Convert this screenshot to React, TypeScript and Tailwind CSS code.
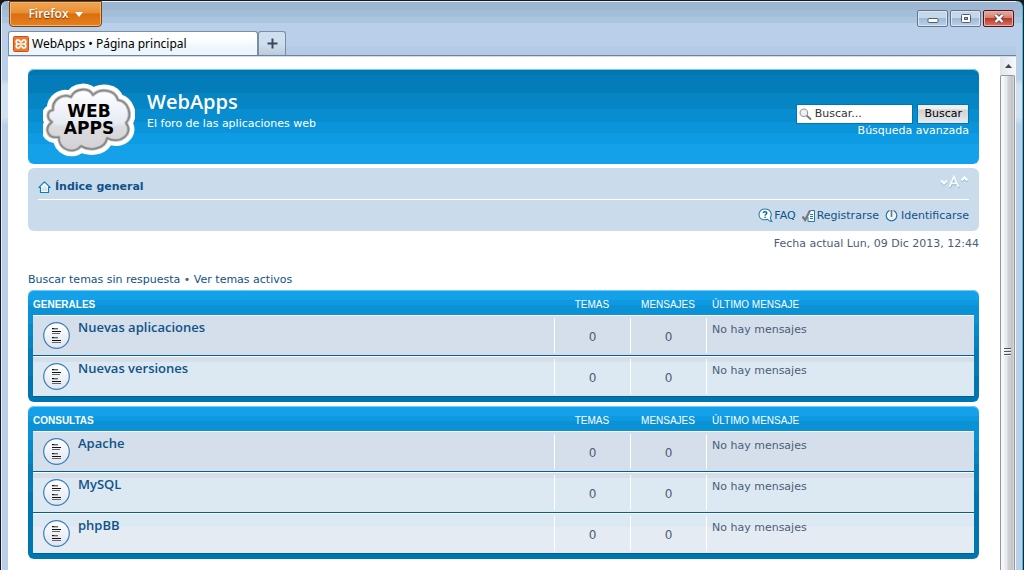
import React from "react";

type Forum = { name: string; topics: number; posts: number; last: string };

const categories: { title: string; forums: Forum[] }[] = [
  {
    title: "GENERALES",
    forums: [
      { name: "Nuevas aplicaciones", topics: 0, posts: 0, last: "No hay mensajes" },
      { name: "Nuevas versiones", topics: 0, posts: 0, last: "No hay mensajes" },
    ],
  },
  {
    title: "CONSULTAS",
    forums: [
      { name: "Apache", topics: 0, posts: 0, last: "No hay mensajes" },
      { name: "MySQL", topics: 0, posts: 0, last: "No hay mensajes" },
      { name: "phpBB", topics: 0, posts: 0, last: "No hay mensajes" },
    ],
  },
];

const rowBackgrounds = [
  "bg-[#d4dfeb]",
  "bg-[linear-gradient(#d4dfeb_0_6px,#dce9f2_6px)]",
  "bg-[linear-gradient(#dce9f2_0_14px,#e4ebf3_14px)]",
];

const cloudPath =
  "M10 27C9 17 19 10 28 14C32 5 46 4 50 12C57 5 72 6 75 17C85 18 90 32 83 40C91 50 78 62 64 55C62 67 46 68 38 63C30 72 15 66 16 54C4 56 1 45 9 39C3 35 4 28 10 27Z";

function CloudLogo() {
  return (
    <svg width="92" height="76" viewBox="0 0 92 76" role="img" aria-label="Web Apps">
      <defs>
        <linearGradient id="cloud" x1="0" y1="0" x2="0" y2="1">
          <stop offset="0" stopColor="#fff" />
          <stop offset="0.55" stopColor="#e6ebf4" />
          <stop offset="0.62" stopColor="#dcdcdf" />
          <stop offset="1" stopColor="#d2d2d4" />
        </linearGradient>
      </defs>
      <g strokeLinejoin="round">
        <path d={cloudPath} fill="#fff" stroke="#fff" strokeWidth="12" />
        <path d={cloudPath} fill="url(#cloud)" stroke="#c4c4c4" strokeWidth="3.5" />
        <path d={cloudPath} fill="none" stroke="#858585" strokeWidth="1.6" />
      </g>
      <text x="46" y="34" textAnchor="middle" className="font-['DejaVu_Sans',sans-serif] text-[17px] leading-4 font-bold">WEB</text>
      <text x="46" y="51" textAnchor="middle" className="font-['DejaVu_Sans',sans-serif] text-[17px] leading-4 font-bold">APPS</text>
    </svg>
  );
}

function XamppIcon() {
  return (
    <svg width="16" height="16" viewBox="0 0 16 16" aria-hidden="true">
      <rect x="0.5" y="0.5" width="15" height="15" rx="1" fill="#f4792b" stroke="#c2541c" />
      <path
        d="M5.2 3.8C2.8 3.8 2.4 6.8 4.6 7.9C2.4 9 2.8 12.2 5.2 12.2C6.6 12.2 6.8 10 8 10C9.2 10 9.400 12.2 10.8 12.2C13.2 12.2 13.6 9 11.4 7.9C13.6 6.8 13.2 3.8 10.8 3.8C9.4 3.8 9.2 6 8 6C6.8 6 6.6 3.8 5.2 3.8ZM5 8H11"
        fill="none"
        stroke="#fff"
        strokeWidth="1.7"
      />
    </svg>
  );
}

function HomeIcon() {
  return (
    <svg width="13" height="13" viewBox="0 0 13 13" aria-hidden="true">
      <path d="M6.5 0.8L0.9 6.4H2.5V11.500H10.5V6.4H12.1Z" fill="#fff" stroke="#0a7fbd" strokeWidth="1.2" strokeLinejoin="round" />
      <path d="M4 7L6.5 4.5L9 7V10H4Z" fill="#dde3ea" />
    </svg>
  );
}

function FaqIcon() {
  return (
    <svg width="15" height="15" viewBox="0 0 15 15" aria-hidden="true">
      <path d="M7 1C3.4 1 1 3.3 1 6.4C1 9.5 3.4 11.8 7 11.8C8 11.8 8.8 11.6 9.6 11.3C10.6 12.7 12 13.7 13.8 13.5C13 12.5 12.5 11 12.4 9.6C14.4 6 12.5 1 7 1Z" fill="#fff" stroke="#2379b0" strokeWidth="1.1" />
      <path d="M5.2 5C5.4 3.3 8.8 3.3 8.8 5.1C8.8 6.3 7.2 6.3 7.1 7.6M7.1 8.8V10" fill="none" stroke="#10659e" strokeWidth="1.4" />
    </svg>
  );
}

function RegisterIcon() {
  return (
    <svg width="14" height="14" viewBox="0 0 14 14" aria-hidden="true">
      <path d="M6.5 3.5L9 1.5H12.5V12.5H6V8" fill="#fff" stroke="#2379b0" />
      <path d="M8 5.500H11M8 7.500H11M8 9.500H11" stroke="#2379b0" />
      <path d="M0.5 7.5L3.2 11L8 1.5" fill="none" stroke="#777" strokeWidth="2.2" />
    </svg>
  );
}

function PowerIcon() {
  return (
    <svg width="13" height="13" viewBox="0 0 13 13" aria-hidden="true">
      <circle cx="6.5" cy="6.5" r="5.3" fill="#eef4f9" stroke="#2379b0" strokeWidth="1.2" />
      <path d="M6.500 0V3" stroke="#cadceb" strokeWidth="4" />
      <path d="M6.5 1V8" stroke="#777" strokeWidth="1.6" />
    </svg>
  );
}

function FontSizeIcon() {
  return (
    <svg width="30" height="14" viewBox="0 0 30 14" aria-hidden="true">
      <g fill="none" strokeWidth="2">
        <path d="M2 6.500L5 9.500L8 6.500M22.500 6.500L25.500 3.500L28.500 6.500" stroke="#8fb4d4" />
        <path d="M2 5.500L5 8.500L8 5.500M22.500 5.500L25.500 2.500L28.500 5.500" stroke="#fff" />
        <path d="M11 13L15.500 2.500L20 13M13 9.500H18" stroke="#8fb4d4" strokeWidth="1.600" />
        <path d="M10.500 12L15 1.500L19.500 12M12.500 8.500H17.500" stroke="#fff" strokeWidth="1.600" />
      </g>
    </svg>
  );
}

function SearchIcon() {
  return (
    <svg width="15" height="15" viewBox="0 0 15 15" aria-hidden="true">
      <path d="M8.500 8.500L13 12.500" stroke="#777" strokeWidth="2.200" strokeLinecap="round" />
      <circle cx="5.500" cy="5.500" r="4.300" fill="#edf1f4" stroke="#999" strokeWidth="1.300" />
    </svg>
  );
}

function TopicIcon() {
  return (
    <svg width="27" height="27" viewBox="0 0 27 27" aria-hidden="true">
      <defs>
        <linearGradient id="disc" x1="0" y1="0" x2="0" y2="1">
          <stop offset="0" stopColor="#fff" />
          <stop offset="1" stopColor="#dfe6ef" />
        </linearGradient>
      </defs>
      <circle cx="13.5" cy="13.5" r="12.800" fill="url(#disc)" stroke="#3b7fbd" strokeWidth="1.200" />
      <path d="M9 6.500H11M9 9.500H18M9 15.500H11M9 18.500H18" stroke="#111" />
      <path d="M11 6.500H15M9 11.500H17M11 15.500H15M9 20.500H18" stroke="#666" />
      <path d="M9 7.500H15M9 16.500H15" stroke="#bbb" />
    </svg>
  );
}

const controlClass =
  "flex h-[17px] w-[31px] items-center justify-center rounded-[2px] border border-[#66758c] bg-[linear-gradient(#c5d7eb_0_50%,#a0bad3_50%,#b9d2ed)] shadow-[inset_0_0_0_1px_#d9e6f4]";

function TitleBar() {
  return (
    <header className="border-b border-[#6f8299] bg-[linear-gradient(#9db6d1_0_9px,#a4bdd8_9px_16px,#acc5df_16px_22px,#b9cfea_22px_45px,#b4cbe5_45px)] shadow-[inset_0_1px_#e5eef7]">
      <div className="flex items-start justify-between pr-[2px] pl-px">
        <button className="flex h-[26px] w-[93px] items-center justify-center gap-[6px] rounded-b-[4px] border border-[#794413] bg-[linear-gradient(#eda04b_0_15%,#e98e32_45%,#da6f10_50%,#e48121)] font-['Open_Sans',sans-serif] text-[12px] font-semibold text-white shadow-[inset_0_0_0_1px_#f6b66d] [text-shadow:0_1px_1px_#7a3500]">
          Firefox
          <svg width="8" height="5" viewBox="0 0 8 5" aria-hidden="true">
            <path d="M0 0H8L4 5Z" fill="#fff" />
          </svg>
        </button>
        <div className="flex gap-[2px] pt-[9px]">
          <button aria-label="Minimizar" className={controlClass}>
            <svg width="12" height="11" viewBox="0 0 12 11"><rect x="1" y="5.500" width="10" height="4" rx="1" fill="#fff" stroke="#515c6c" /></svg>
          </button>
          <button aria-label="Maximizar" className={controlClass}>
            <svg width="12" height="11" viewBox="0 0 12 11">
              <rect x="1.500" y="1.500" width="9" height="8" rx="1" fill="#fff" stroke="#515c6c" />
              <rect x="4.500" y="4.500" width="3" height="2" fill="#9bb4d0" stroke="#515c6c" />
            </svg>
          </button>
          <button
            aria-label="Cerrar"
            className="flex h-[17px] w-[31px] items-center justify-center rounded-[2px] border border-[#4c1420] bg-[linear-gradient(#dfa096_0_15%,#d67767_50%,#bb3a22_50%,#d57766)] shadow-[inset_0_0_0_1px_#e9b1a7]"
          >
            <svg width="12" height="11" viewBox="0 0 12 11">
              <path d="M2.500 2L9.500 9M9.500 2L2.500 9" stroke="#5d4b55" strokeWidth="4.200" />
              <path d="M2.500 2L9.500 9M9.500 2L2.500 9" stroke="#fff" strokeWidth="2.400" />
            </svg>
          </button>
        </div>
      </div>
      <div className="flex pt-1" role="tablist">
        <button
          role="tab"
          aria-selected="true"
          className="flex h-6 w-[250px] items-center gap-[3px] rounded-t-[3px] border border-b-0 border-[#7b8ca5] bg-[linear-gradient(#fff_0_25%,#ecf5fc_75%)] px-1 font-['Noto_Sans',sans-serif] text-[12px] text-black"
        >
          <XamppIcon />
          <span className="whitespace-nowrap">WebApps • Página principal</span>
        </button>
        <button
          aria-label="Nueva pestaña"
          className="flex h-6 w-7 items-center justify-center rounded-t-[3px] border border-b-0 border-[#7b8ca5] bg-[linear-gradient(#cfdff0_0_50%,#bccbdc)]"
        >
          <svg width="11" height="11" viewBox="0 0 11 11"><path d="M5.500 0.500V10.500M0.500 5.500H10.500" stroke="#39475c" strokeWidth="2" /></svg>
        </button>
      </div>
    </header>
  );
}

function ScrollBar() {
  return (
    <div aria-hidden="true" className="flex w-[16px] shrink-0 flex-col bg-[linear-gradient(90deg,#e3e5ec,#f5f8fc)]">
      <div className="flex h-[18px] items-center justify-center">
        <svg width="7" height="4" viewBox="0 0 7 4"><path d="M0 4L3.500 0L7 4Z" fill="#444" /></svg>
      </div>
      <div className="mr-px flex flex-1 items-center justify-center rounded-t-[2px] border border-b-0 border-[#969696] bg-[linear-gradient(90deg,#f6f7f8_0_3px,#e6eaf0_4px_6px,#cdd0d4_7px_9px,#bfc0c3_11px,#dcdddf)] pt-14">
        <svg width="8" height="9" viewBox="0 0 8 9">
          <path d="M0 1.500H7M0 4.500H7M0 7.500H7" stroke="#555" />
          <path d="M0 2.500H7M0 5.500H7M0 8.500H7" stroke="#f2f2f2" />
        </svg>
      </div>
    </div>
  );
}

function SiteHeader() {
  return (
    <div className="flex items-start justify-between rounded-[6px] bg-[linear-gradient(#0076b1_0_6px,#037cb9_6px_24px,#0685c5_24px_40px,#088dd0_40px_53px,#0b94da_53px_64px,#0d9be3_64px_75px,#15a1e9_75px)] pr-[10px] pb-[5px] pl-[15px] shadow-[inset_0_1px_#6fcdf7]">
      <div className="flex gap-3 pt-[14px]">
        <a href="#inicio"><CloudLogo /></a>
        <div className="pt-[5px] text-white">
          <h1 className="font-['Open_Sans',sans-serif] text-[20px] leading-7 font-semibold">WebApps</h1>
          <p className="leading-4">El foro de las aplicaciones web</p>
        </div>
      </div>
      <form className="pt-[35px] text-right" onSubmit={(e) => e.preventDefault()}>
        <div className="flex gap-1">
          <label className="flex h-5 w-[117px] items-center border border-[#0075b0] bg-white pl-[2px]">
            <SearchIcon />
            <input aria-label="Buscar" defaultValue="Buscar..." className="w-full min-w-0 bg-transparent pl-[2px] text-[11px] text-[#333] outline-none" />
          </label>
          <button className="h-5 border border-[#0075b0] bg-[linear-gradient(#efefef_0_20%,#d2d2d2_30%,#e4ebf3)] px-[6px] text-[11px] text-black">Buscar</button>
        </div>
        <a href="#busqueda" className="block leading-[14px] text-white">Búsqueda avanzada</a>
      </form>
    </div>
  );
}

function NavBar() {
  return (
    <nav className="mt-1 rounded-[6px] bg-[#cadceb] px-[10px] pb-2">
      <div className="flex h-8 items-start justify-between border-b border-white pt-3">
        <a href="#indice" className="flex items-center gap-1 leading-[14px] font-bold text-[#105289]">
          <HomeIcon />
          Índice general
        </a>
        <button aria-label="Cambiar tamaño de fuente" className="-mt-[5px]"><FontSizeIcon /></button>
      </div>
      <div className="flex justify-end gap-[6px] pt-2 leading-[15px] text-[#105289]">
        <a href="#faq" className="flex items-center gap-px"><FaqIcon />FAQ</a>
        <a href="#registro" className="flex items-center gap-px"><RegisterIcon />Registrarse</a>
        <a href="#entrar" className="flex items-center gap-[3px]"><PowerIcon />Identificarse</a>
      </div>
    </nav>
  );
}

function Category({ title, forums }: { title: string; forums: Forum[] }) {
  return (
    <section className="rounded-[6px] bg-[linear-gradient(#15a1e9_0_10px,#0d9ae1_10px_15px,#0b91d6_15px_34px,#0889ca_34px_46px,#0584c3_46px_58px,#037cb9_58px_86px,#0076b1_86px)] px-[5px] pb-[5px] shadow-[inset_0_1px_#6fcdf7]">
      <table className="w-full table-fixed border-separate border-spacing-0">
        <thead className="font-['Liberation_Sans',Arial,sans-serif] text-[10px] leading-3 text-white">
          <tr className="h-[25px]">
            <th className="pt-1 text-left font-bold">{title}</th>
            <th className="w-[76px] pt-1 font-normal">TEMAS</th>
            <th className="w-[76px] pt-1 font-normal">MENSAJES</th>
            <th className="w-[268px] pt-1 pl-[6px] text-left font-normal">ÚLTIMO MENSAJE</th>
          </tr>
        </thead>
        <tbody>
          {forums.map((forum, i) => (
            <tr key={forum.name} className={rowBackgrounds[i] + " [&>td]:border-t [&>td]:border-b [&>td]:border-t-white [&>td]:border-b-[#00608f] [&>td]:p-0"}>
              <td>
                <div className="flex h-[39px] items-start gap-2 pt-1 pl-[10px]">
                  <span className="pt-[2px]"><TopicIcon /></span>
                  <a href="#foro" className="font-['Open_Sans',sans-serif] text-[13px] leading-[14px] font-semibold text-[#105289]">{forum.name}</a>
                </div>
              </td>
              <td className="text-center text-[12px] text-[#4c5d77]">
                <div className="my-[2px] h-[35px] border-l border-white pt-[2px] leading-[34px]">{forum.topics}</div>
              </td>
              <td className="text-center text-[12px] text-[#4c5d77]">
                <div className="my-[2px] h-[35px] border-l border-white pt-[2px] leading-[34px]">{forum.posts}</div>
              </td>
              <td className="text-[#4c5d77]">
                <div className="my-[2px] h-[35px] border-l border-white pt-[5px] pl-[5px] leading-[14px]">{forum.last}</div>
              </td>
            </tr>
          ))}
        </tbody>
      </table>
    </section>
  );
}

export default function App() {
  return (
    <div className="flex min-h-screen flex-col bg-[#17191d] px-px pt-px font-['DejaVu_Sans',Verdana,sans-serif] text-[11px]">
      <div className="flex flex-1 flex-col rounded-t-[6px] border-r border-l border-r-[#23c8f0] border-l-[#e2edf8] bg-[linear-gradient(#9db6d1_0_9px,#a4bdd8_9px_16px,#acc5df_16px_22px,#b9cfea_22px_78px,#d3e2f2_84px_116px,#b9cfea_124px)] px-[6px]">
        <TitleBar />
        <div className="flex flex-1 border-t border-[#c9dbef] bg-white">
          <main className="min-w-0 flex-1 pt-3 pr-[21px] pb-[11px] pl-5">
            <SiteHeader />
            <NavBar />
            <p className="pt-[6px] text-right leading-[14px] text-[#4c5d77]">Fecha actual Lun, 09 Dic 2013, 12:44</p>
            <p className="pt-[22px] pb-[3px] leading-[14px] text-[#4c5d77]">
              <a href="#sin-respuesta" className="text-[#105289]">Buscar temas sin respuesta</a>
              {" • "}
              <a href="#activos" className="text-[#105289]">Ver temas activos</a>
            </p>
            <div className="flex flex-col gap-1">
              {categories.map((c) => (
                <Category key={c.title} {...c} />
              ))}
            </div>
          </main>
          <ScrollBar />
        </div>
      </div>
    </div>
  );
}
